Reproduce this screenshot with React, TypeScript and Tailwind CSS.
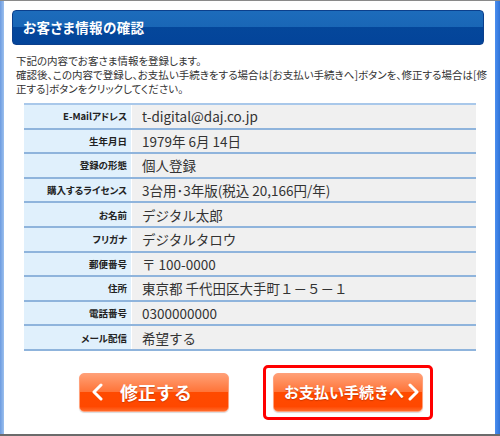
import React from 'react';

const rows: { label: string; value: string }[] = [
  { label: 'E-Mailアドレス', value: 't-digital@daj.co.jp' },
  { label: '生年月日', value: '1979年 6月 14日' },
  { label: '登録の形態', value: '個人登録' },
  { label: '購入するライセンス', value: '3台用･3年版(税込 20,166円/年)' },
  { label: 'お名前', value: 'デジタル太郎' },
  { label: 'フリガナ', value: 'デジタルタロウ' },
  { label: '郵便番号', value: '〒 100-0000' },
  { label: '住所', value: '東京都 千代田区大手町１－５－１' },
  { label: '電話番号', value: '0300000000' },
  { label: 'メール配信', value: '希望する' },
];

function OrangeButton({ children }: { children: React.ReactNode }) {
  return (
    <button className="w-[150px] h-[39px] rounded-[5px] border border-[#ffa07a] bg-[linear-gradient(to_bottom,#ff9f75_0%,#ff7438_48%,#ff4a00_50%,#ff4800_88%,#ff6a2a_100%)] text-white font-bold flex items-center shadow-[0_1px_1px_rgba(0,0,0,0.15)] [font-feature-settings:normal]">
      {children}
    </button>
  );
}

export default function App() {
  return (
    <div
      className="w-[500px] h-[436px] bg-white flex border-t border-t-[#8a8a8a] border-b-2 border-b-[#6b6b6b] overflow-hidden text-[#333] [font-feature-settings:'palt']"
      style={{ fontFamily: '"Noto Sans CJK JP", "Noto Sans", sans-serif' }}
    >
      {/* left window frame */}
      <div className="w-[4px] bg-[linear-gradient(to_right,#6c9be0,#9cc0ee)]" />

      <div className="flex-1 flex flex-col">
        {/* header bar */}
        <div className="mt-[9px] ml-[8px] mr-[11px] h-[35px] rounded-[4px] border border-[#0b3f8c] bg-[linear-gradient(to_bottom,#1d6cbb_0%,#1966b6_50%,#04479b_50%,#03449a_100%)] flex items-center pl-[10px]">
          <span className="text-white font-bold text-[13.5px] tracking-[0.4px]">お客さま情報の確認</span>
        </div>

        {/* intro text */}
        <div className="mt-[9px] pl-[12px] text-[10.5px] leading-[14px] whitespace-nowrap">
          <p>下記の内容でお客さま情報を登録します。</p>
          <p>確認後、この内容で登録し、お支払い手続きをする場合は[お支払い手続きへ]ボタンを、修正する場合は[修</p>
          <p>正する]ボタンをクリックしてください。</p>
        </div>

        {/* confirmation table */}
        <div className="mt-[7px] ml-[20px] w-[452px] border-t-2 border-t-[#a9c8ea]">
          {rows.map((r) => (
            <div key={r.label} className="flex h-[24.6px] border-b-2 border-b-[#8fb4dc]">
              <div className="w-[107px] bg-[#e0f0fc] flex items-center justify-end pr-[4px] text-[9.5px] font-bold text-[#222]">
                {r.label}
              </div>
              <div className="w-[1px] bg-white" />
              <div className="flex-1 bg-[#f0f0f0] flex items-center pl-[10px] text-[13.5px] text-[#333] [font-feature-settings:normal]">
                {r.value}
              </div>
            </div>
          ))}
        </div>

        {/* buttons */}
        <div className="mt-[14px] pl-[75px] flex items-center gap-[34px]">
          <OrangeButton>
            <svg width="14" height="18" viewBox="0 0 14 18" className="ml-[11px]">
              <polyline points="10,2 3,9 10,16" fill="none" stroke="white" strokeWidth="3" strokeLinecap="round" strokeLinejoin="round" />
            </svg>
            <span className="ml-[15px] text-[18px] [text-shadow:0_1px_1px_rgba(160,40,0,0.5)]">修正する</span>
          </OrangeButton>

          <div className="border-[3px] border-[#ff0000] rounded-[5px] px-[7px] py-[5px] bg-white">
            <OrangeButton>
              <span className="ml-[10px] text-[15px] [text-shadow:0_1px_1px_rgba(160,40,0,0.5)]">お支払い手続きへ</span>
              <svg width="14" height="18" viewBox="0 0 14 18" className="ml-[2px]">
                <polyline points="4,2 11,9 4,16" fill="none" stroke="white" strokeWidth="3" strokeLinecap="round" strokeLinejoin="round" />
              </svg>
            </OrangeButton>
          </div>
        </div>
      </div>

      {/* right window frame */}
      <div className="w-[5px] bg-[linear-gradient(to_right,#4b8ff0,#2f73d8)]" />
    </div>
  );
}
